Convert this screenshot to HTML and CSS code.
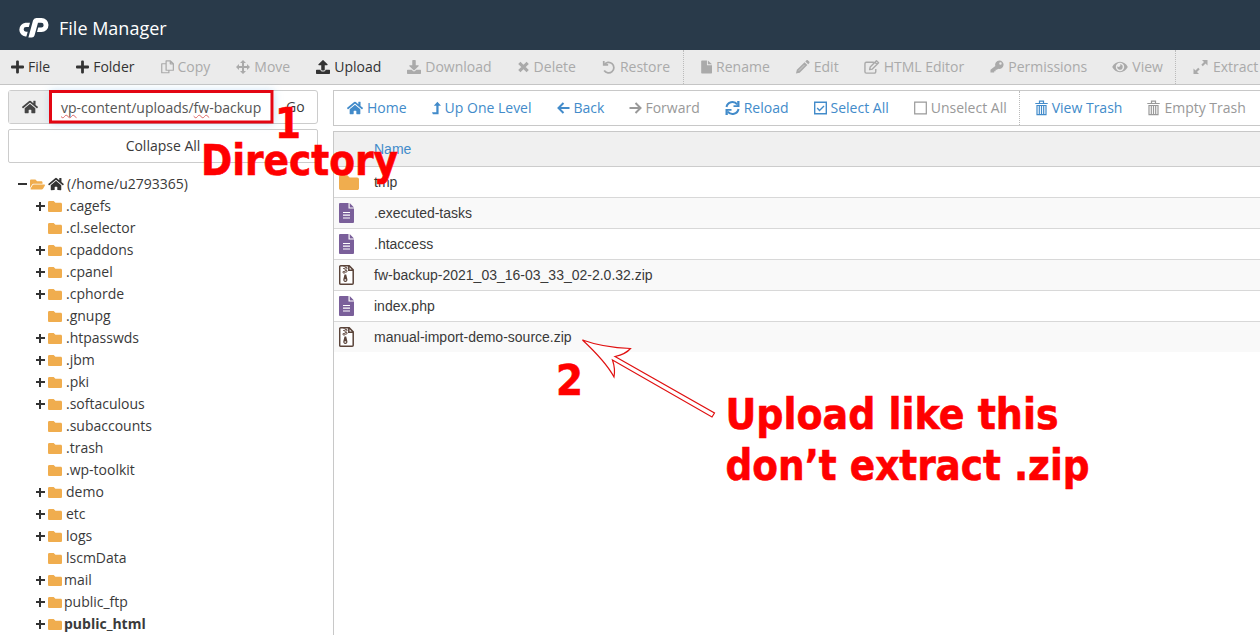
FILE: index.html
```html
<!DOCTYPE html>
<html lang="en">
<head>
<meta charset="utf-8">
<title>File Manager</title>
<link rel="stylesheet" href="styles.css">
</head>
<body>
<svg class="defs" aria-hidden="true">
<symbol id="plus" viewBox="0 32 448 448"><path d="M416 208H272V64c0-18-14-32-32-32h-32c-18 0-32 14-32 32v144H32c-18 0-32 14-32 32v32c0 18 14 32 32 32h144v144c0 18 14 32 32 32h32c18 0 32-14 32-32V304h144c18 0 32-14 32-32v-32c0-18-14-32-32-32z"/></symbol>
<symbol id="home" viewBox="0 0 576 512"><path d="M280.37 148.26L96 300.11V464a16 16 0 0 0 16 16l112.06-.29a16 16 0 0 0 15.92-16V368a16 16 0 0 1 16-16h64a16 16 0 0 1 16 16v95.64a16 16 0 0 0 16 16.05L464 480a16 16 0 0 0 16-16V300L295.67 148.26a12.19 12.19 0 0 0-15.3 0zM571.6 251.47L488 182.56V44.05a12 12 0 0 0-12-12h-56a12 12 0 0 0-12 12v72.61L318.47 43a48 48 0 0 0-61 0L4.34 251.47a12 12 0 0 0-1.6 16.9l25.5 31A12 12 0 0 0 45.15 301l235.22-193.74a12.19 12.19 0 0 1 15.3 0L530.9 301a12 12 0 0 0 16.9-1.6l25.5-31a12 12 0 0 0-1.7-16.93z"/></symbol>
<symbol id="folder" viewBox="0 64 512 384" preserveAspectRatio="none"><path d="M464 128H272l-64-64H48C21 64 0 85 0 112v288c0 27 21 48 48 48h416c27 0 48-21 48-48V176c0-27-21-48-48-48z"/></symbol>
<symbol id="folder-open" viewBox="0 64 576 384"><path d="M573 293l-73 124c-11 19-32 31-55 31H45c-18 0-30-20-20-36l72-124c12-20 33-32 56-32h400c18 0 30 20 20 37zM153 224h327v-48c0-27-21-48-48-48H272l-64-64H48C22 64 0 86 0 112v278l70-118c17-30 49-48 83-48z"/></symbol>
<symbol id="upload" viewBox="0 0 512 512"><path d="M296 384h-80c-13.3 0-24-10.7-24-24V192h-87.7c-17.8 0-26.7-21.5-14.1-34.1L242.3 5.7c7.5-7.5 19.8-7.5 27.3 0l152.2 152.2c12.6 12.6 3.7 34.1-14.1 34.1H320v168c0 13.3-10.7 24-24 24zm216-8v112c0 13.3-10.7 24-24 24H24c-13.3 0-24-10.7-24-24V376c0-13.3 10.7-24 24-24h136v8c0 30.9 25.1 56 56 56h80c30.9 0 56-25.1 56-56v-8h136c13.3 0 24 10.7 24 24z"/></symbol>
<symbol id="download" viewBox="0 0 512 512"><path d="M216 0h80c13.3 0 24 10.7 24 24v168h87.7c17.8 0 26.7 21.5 14.1 34.1L269.7 378.3c-7.5 7.5-19.8 7.5-27.3 0L90.1 226.1c-12.6-12.6-3.7-34.1 14.1-34.1H192V24c0-13.3 10.7-24 24-24zm296 376v112c0 13.3-10.7 24-24 24H24c-13.3 0-24-10.7-24-24V376c0-13.3 10.7-24 24-24h146.7l49 49c20.1 20.1 52.5 20.1 72.6 0l49-49H488c13.3 0 24 10.7 24 24z"/></symbol>
<symbol id="copy" viewBox="0 0 14 16"><path d="M5.500 1.500h4.700l3.100 2.900v7.100H5.500zM10 1.500v3.100h3.300M5.500 4.500H.8v9.700h7.700v-2.700" fill="none" stroke="currentColor" stroke-width="1.300" stroke-linejoin="round"/></symbol>
<symbol id="move" viewBox="1 1 14 14"><path d="M8 1l3 3H9v3h3V5l3 3-3 3V9H9v3h2l-3 3-3-3h2V9H4v2L1 8l3-3v2h3V4H5z"/></symbol>
<symbol id="times" viewBox="0 0 14 14"><path d="M2.500 2.500l9 9M11.500 2.500l-9 9" fill="none" stroke="currentColor" stroke-width="3.400"/></symbol>
<symbol id="undo" viewBox="0 0 16 16"><path d="M2.500 5.500a6 6 0 1 1 0 6.500" fill="none" stroke="currentColor" stroke-width="2"/><path d="M1 1h2v3.500h4v2H1z"/></symbol>
<symbol id="file" viewBox="0 0 12 16"><path d="M1 1h5.500v5H12v8.300a.8.8 0 0 1-.8.8H1a.8.8 0 0 1-.8-.8V1.800A.8.8 0 0 1 1 1zm6.500 0L12 5H7.500z"/></symbol>
<symbol id="pencil" viewBox="0 0 16 16"><path d="M10.200 2.800l3 3L5 14l-4 1 1-4zM11 2l1-1c.7-.6 1.200-.6 1.900 0l1.200 1.200c.6.7.6 1.200 0 1.800l-1 1z"/><path d="M4 12l6-6" stroke="#ebebeb" stroke-width=".6"/></symbol>
<symbol id="compose" viewBox="0 0 17 16"><path d="M10.500 3H2.500A1.500 1.500 0 0 0 1 4.500v8.500a1.500 1.500 0 0 0 1.500 1.500H11a1.500 1.500 0 0 0 1.500-1.500v-3M6 10.800l.6-2.900 6.600-6.600 2.300 2.300-6.600 6.600zM11.600 3l2.200 2.200" fill="none" stroke="currentColor" stroke-width="1.500" stroke-linejoin="round"/></symbol>
<symbol id="key" viewBox="0.500 0.500 15 15"><path fill-rule="evenodd" d="M10.500 1a4.500 4.500 0 1 1-1.300 8.800L8 11H6.500v1.500H5V14H1v-3l5.200-4.200A4.500 4.500 0 0 1 10.500 1zm1.200 2a1.300 1.300 0 1 0 0 2.600 1.300 1.300 0 0 0 0-2.600z"/></symbol>
<symbol id="eye" viewBox="0 0 16 16"><path fill-rule="evenodd" d="M8 2.800c3.500 0 6.200 2.200 7.800 5.200-1.600 3-4.300 5.200-7.800 5.200S1.800 11 .2 8C1.800 5 4.500 2.800 8 2.800zm0 1a4.200 4.200 0 1 0 0 8.400 4.200 4.200 0 0 0 0-8.400zm0 1.500a2.700 2.700 0 1 1-2.600 2A1.600 1.600 0 0 0 8 5.300z"/></symbol>
<symbol id="expand" viewBox="0.500 0 16 16"><path d="M9.500 1H15v5.500l-2-2-2.700 2.700-1.500-1.500L11.500 3zM1 9.500l2 2 2.700-2.700 1.500 1.500L4.500 13l2 2H1z"/></symbol>
<symbol id="level-up" viewBox="0 0 10 16"><path d="M6 1l4 4.500H7.300V15H1l-1-2.200h4.800V5.500H2z"/></symbol>
<symbol id="left" viewBox="0.500 0 13 14"><path d="M7 2L2 7l5 5M2 7h11" fill="none" stroke="currentColor" stroke-width="2"/></symbol>
<symbol id="right" viewBox="0.500 0 13 14"><path d="M7 2l5 5-5 5M12 7H1" fill="none" stroke="currentColor" stroke-width="2"/></symbol>
<symbol id="sync" viewBox="0.500 0.500 15 15"><path d="M2 7a6 6 0 0 1 10.700-2.600M14 9a6 6 0 0 1-10.700 2.600" fill="none" stroke="currentColor" stroke-width="2"/><path d="M15 1v6H9V5.300h3.700V1zM1 15V9h6v1.700H3.300V15z"/></symbol>
<symbol id="checked" viewBox="0.500 0.500 13 13"><path d="M1.200 1.200h11.600v11.600H1.200zM3.700 7l2.300 2.400L10.500 5" fill="none" stroke="currentColor" stroke-width="1.400"/></symbol>
<symbol id="unchecked" viewBox="0.500 0.500 13 13"><path d="M1.200 1.200h11.600v11.600H1.200z" fill="none" stroke="currentColor" stroke-width="1.200"/></symbol>
<symbol id="trash" viewBox="0 0 13 16"><path d="M.3 3.500h12.400M4.500 3V1.200h4V3M2 5.500v9.200h9V5.500zM4.300 6v8M6.500 6v8M8.700 6v8" fill="none" stroke="currentColor" stroke-width="1.200"/></symbol>
<symbol id="doc" viewBox="0 0 15 20"><path d="M1 0h8.500v5.500H15V19a1 1 0 0 1-1 1H1a1 1 0 0 1-1-1V1a1 1 0 0 1 1-1zm9.700 0L15 4.400h-4.300z"/><path d="M4 9.500h7M4 12.200h7M4 15h7" stroke="#fff" stroke-width="1.200"/></symbol>
<symbol id="zip" viewBox="0 0 15 20"><path d="M1.700.8h8.500l4 4.100v13.300a1 1 0 0 1-1 1H1.700a1 1 0 0 1-1-1V1.800a1 1 0 0 1 1-1zM9.800 1v4.300h4.200" fill="#fff" stroke="currentColor" stroke-width="1.500"/><path d="M4 1h2v1.500h2V4H6v1.500h2V7H6v1H4V6.500h2M4 3.500h2" fill="none" stroke="currentColor" stroke-width=".8"/><path d="M5.500 9.500h1.700l1.100 4.500a2.100 2.100 0 1 1-3.900 0z"/><ellipse cx="6.300" cy="15" rx="1" ry=".8" fill="#fff"/></symbol>
</svg>

<header class="topbar">
<svg class="logo" viewBox="0 0 30 20"><path d="M11.500 4.700L10.300 9H7.500a2.300 2.300 0 0 0 0 4.700h1.700L7.900 18.600H7A7 7 0 0 1 7 4.700z"/><path d="M14.500 2.500Q15.200 0 17.800 0H23a7 7 0 0 1 0 14h-4.500l1.200-4.400h3a2.400 2.400 0 0 0 0-4.900h-3.200L16 17.500q-.6 2-2.700 2H9.900z"/></svg>
<h1 class="title">File Manager</h1>
</header>

<nav class="toolbar">
<span class="tool on"><svg class="i13"><use href="#plus"/></svg>File</span>
<span class="tool on"><svg class="i13"><use href="#plus"/></svg>Folder</span>
<span class="tool"><svg class="i13"><use href="#copy"/></svg>Copy</span>
<span class="tool"><svg class="i14"><use href="#move"/></svg>Move</span>
<span class="tool on"><svg class="i14"><use href="#upload"/></svg>Upload</span>
<span class="tool snug"><svg class="i14"><use href="#download"/></svg>Download</span>
<span class="tool"><svg class="i13"><use href="#times"/></svg>Delete</span>
<span class="tool"><svg class="i14"><use href="#undo"/></svg>Restore</span>
<span class="tool group snug"><svg class="i11"><use href="#file"/></svg>Rename</span>
<span class="tool snug"><svg class="i15"><use href="#pencil"/></svg>Edit</span>
<span class="tool"><svg class="i16"><use href="#compose"/></svg>HTML Editor</span>
<span class="tool snug"><svg class="i14"><use href="#key"/></svg>Permissions</span>
<span class="tool snug"><svg class="i16"><use href="#eye"/></svg>View</span>
<span class="tool group"><svg class="i16"><use href="#expand"/></svg>Extract</span>
</nav>

<main class="content">
<aside class="side">
<div class="path">
<span class="path-home"><svg class="i16"><use href="#home"/></svg></span>
<span class="path-input"><span class="typo">vp</span>-content/uploads/<span class="typo">fw</span>-backup</span>
<span class="path-go">Go</span>
</div>
<div class="collapse">Collapse All</div>
<ul class="tree">
<li class="root"><i class="minus"></i><svg class="open"><use href="#folder-open"/></svg><svg class="i16"><use href="#home"/></svg>(/home/u2793365)</li>
<li class="more"><svg><use href="#folder"/></svg>.cagefs</li>
<li><svg><use href="#folder"/></svg>.cl.selector</li>
<li class="more"><svg><use href="#folder"/></svg>.cpaddons</li>
<li class="more"><svg><use href="#folder"/></svg>.cpanel</li>
<li class="more"><svg><use href="#folder"/></svg>.cphorde</li>
<li><svg><use href="#folder"/></svg>.gnupg</li>
<li class="more"><svg><use href="#folder"/></svg>.htpasswds</li>
<li class="more"><svg><use href="#folder"/></svg>.jbm</li>
<li class="more"><svg><use href="#folder"/></svg>.pki</li>
<li class="more"><svg><use href="#folder"/></svg>.softaculous</li>
<li><svg><use href="#folder"/></svg>.subaccounts</li>
<li><svg><use href="#folder"/></svg>.trash</li>
<li><svg><use href="#folder"/></svg>.wp-toolkit</li>
<li class="more"><svg><use href="#folder"/></svg>demo</li>
<li class="more"><svg><use href="#folder"/></svg>etc</li>
<li class="more"><svg><use href="#folder"/></svg>logs</li>
<li><svg><use href="#folder"/></svg>lscmData</li>
<li class="more tight"><svg><use href="#folder"/></svg>mail</li>
<li class="more tight"><svg><use href="#folder"/></svg>public_ftp</li>
<li class="more tight current"><svg><use href="#folder"/></svg>public_html</li>
</ul>
</aside>

<section class="files">
<nav class="actions">
<span class="act"><svg class="i16"><use href="#home"/></svg>Home</span>
<span class="act"><svg class="i9"><use href="#level-up"/></svg>Up One Level</span>
<span class="act"><svg class="i13"><use href="#left"/></svg>Back</span>
<span class="act off near"><svg class="i13"><use href="#right"/></svg>Forward</span>
<span class="act"><svg class="i15"><use href="#sync"/></svg>Reload</span>
<span class="act"><svg class="i13"><use href="#checked"/></svg>Select All</span>
<span class="act off"><svg class="i13"><use href="#unchecked"/></svg>Unselect All</span>
<span class="act group"><svg class="i13"><use href="#trash"/></svg>View Trash</span>
<span class="act off"><svg class="i13"><use href="#trash"/></svg>Empty Trash</span>
</nav>
<div class="list">
<div class="list-head">Name</div>
<div class="row"><span class="kind dir"><svg><use href="#folder"/></svg></span>tmp</div>
<div class="row"><span class="kind doc"><svg><use href="#doc"/></svg></span>.executed-tasks</div>
<div class="row"><span class="kind doc"><svg><use href="#doc"/></svg></span>.htaccess</div>
<div class="row"><span class="kind zip"><svg><use href="#zip"/></svg></span>fw-backup-2021_03_16-03_33_02-2.0.32.zip</div>
<div class="row"><span class="kind doc"><svg><use href="#doc"/></svg></span>index.php</div>
<div class="row"><span class="kind zip"><svg><use href="#zip"/></svg></span>manual-import-demo-source.zip</div>
</div>
</section>
</main>

<svg class="notes" viewBox="0 0 1260 635">
<rect x="50.500" y="91.500" width="221.500" height="30.500" class="frame"/>
<path class="arrow" d="M582.500 340Q603 347.500 630.500 348.500Q626 354 615 356.500L714.500 413L712 417L612.500 360Q615.500 369 614 377Q606 362 582.500 340z"/>
<text x="275" y="138" textLength="26" lengthAdjust="spacingAndGlyphs">1</text>
<text x="201" y="175" textLength="197" lengthAdjust="spacingAndGlyphs">Directory</text>
<text x="556" y="395" textLength="27" lengthAdjust="spacingAndGlyphs">2</text>
<text x="725.500" y="429" textLength="333" lengthAdjust="spacingAndGlyphs">Upload like this</text>
<text x="725.500" y="480" textLength="364" lengthAdjust="spacingAndGlyphs">don’t extract .zip</text>
</svg>
</body>
</html>
```

FILE: styles.css
```css
* { box-sizing: border-box; }
body {
  margin: 0;
  width: 1260px;
  height: 635px;
  overflow: hidden;
  display: flex;
  flex-direction: column;
  background: #fff;
  color: #3a3a3a;
  font: 14px/20px "Open Sans", "Noto Sans", sans-serif;
}
svg { fill: currentColor; flex: none; height: 16px; }
.defs { position: absolute; width: 0; height: 0; }
.i9 { width: 9px; }
.i11 { width: 11px; }
.i13 { width: 13px; }
.i14 { width: 14px; }
.i15 { width: 15px; }
.i16 { width: 16px; }

.topbar {
  height: 50px;
  flex: none;
  display: flex;
  align-items: center;
  gap: 10px;
  padding: 6px 0 0 18px;
  background: #293a4a;
  color: #fff;
}
.logo { width: 31px; height: 20px; }
.title { margin: 0; font-size: 18px; font-weight: 400; line-height: 24px; }

.toolbar {
  height: 35px;
  flex: none;
  display: flex;
  background: #ebebeb;
  border-bottom: 1px solid #c5c5c5;
  color: #aaa;
  overflow: hidden;
}
.tool, .act {
  flex: none;
  display: flex;
  align-items: center;
  gap: 4px;
  padding: 0 13px;
  white-space: nowrap;
}
.tool:first-child { padding-left: 11px; }
.tool.on { color: #333; }
.tool.snug { padding-right: 12px; }
.tool.group, .act.group { border-left: 1px dotted #bbb; padding-left: 17px; }

.content { flex: 1; display: flex; padding: 5px 0 0 8px; gap: 15px; min-height: 0; }
.side { width: 310px; flex: none; }
.path { height: 34px; display: flex; border: 1px solid #ccc; border-radius: 3px; }
.path-home {
  width: 41px;
  display: flex;
  align-items: center;
  justify-content: center;
  background: #eee;
  color: #444;
}
.path-input {
  width: 224px;
  padding: 7px 0 0 11px;
  color: #555;
  background: #fff;
  box-shadow: 0 0 8px rgba(102, 175, 233, .4);
}
.path-go { padding: 6px 0 0 12px; }
.typo { text-decoration: underline wavy #d66 1px; text-underline-offset: 1px; text-decoration-skip-ink: none; }
.collapse {
  height: 34px;
  margin-top: 5px;
  padding-top: 6px;
  border: 1px solid #ccc;
  border-radius: 2px;
  text-align: center;
}
.tree { list-style: none; margin: 10px 0 0; padding: 0; }
.tree li {
  height: 22px;
  display: flex;
  align-items: center;
  gap: 4px;
  padding-left: 40px;
  background-repeat: no-repeat;
}
.tree li.tight { gap: 2px; }
.tree li svg { width: 14px; height: 11px; color: #f0ad4e; }
.tree li.more {
  background-image: linear-gradient(#333, #333), linear-gradient(#333, #333);
  background-size: 9px 2px, 2px 9px;
  background-position: 28px 10px, 31px 7px;
}
.tree li.root { padding-left: 10px; gap: 3px; }
.minus { width: 9px; height: 2px; background: #333; }
.tree .root svg.open { width: 15px; height: 11px; }
.tree .root svg.i16 { width: 16px; height: 14px; color: #333; }
.current { font-weight: 700; }

.files { flex: 1; display: flex; flex-direction: column; gap: 5px; min-width: 0; }
.actions {
  height: 36px;
  flex: none;
  display: flex;
  border: 1px solid #c8c8c8;
  border-right: 0;
  color: #428bca;
  overflow: hidden;
}
.act { padding-right: 12px; }
.act.off { color: #999; }
.act.near { gap: 3px; }
.act.group { padding-left: 15px; }
.list {
  flex: 1;
  border: 1px solid #c8c8c8;
  border-width: 1px 0 0 1px;
  font-family: "Liberation Sans", Arial, sans-serif;
}
.list-head {
  height: 35px;
  padding: 7px 0 0 40px;
  background: #f0f0f0;
  border-bottom: 1px solid #ccc;
  color: #428bca;
}
.row { height: 31px; display: flex; align-items: center; border-bottom: 1px solid #d8d8d8; }
.row:nth-child(odd) { background: #f9f9f9; }
.row:last-child { height: 30px; border-bottom: 0; }
.kind { width: 40px; padding-left: 5px; display: flex; }
.kind svg { width: 15px; height: 20px; }
.kind.dir svg { width: 20px; height: 15px; }
.dir { color: #f0ad4e; }
.doc { color: #7a5f9a; }
.zip { color: #5a4339; }

.notes { position: absolute; left: 0; top: 0; width: 1260px; height: 635px; }
.notes text {
  font: 700 43px "DejaVu Sans Condensed", "DejaVu Sans", sans-serif;
  fill: #f00;
  stroke: #f00;
  stroke-width: .6;
}
.frame { fill: none; stroke: #e30613; stroke-width: 3; }
.arrow { fill: #fff; stroke: #e01010; stroke-width: 1.2; }
```
